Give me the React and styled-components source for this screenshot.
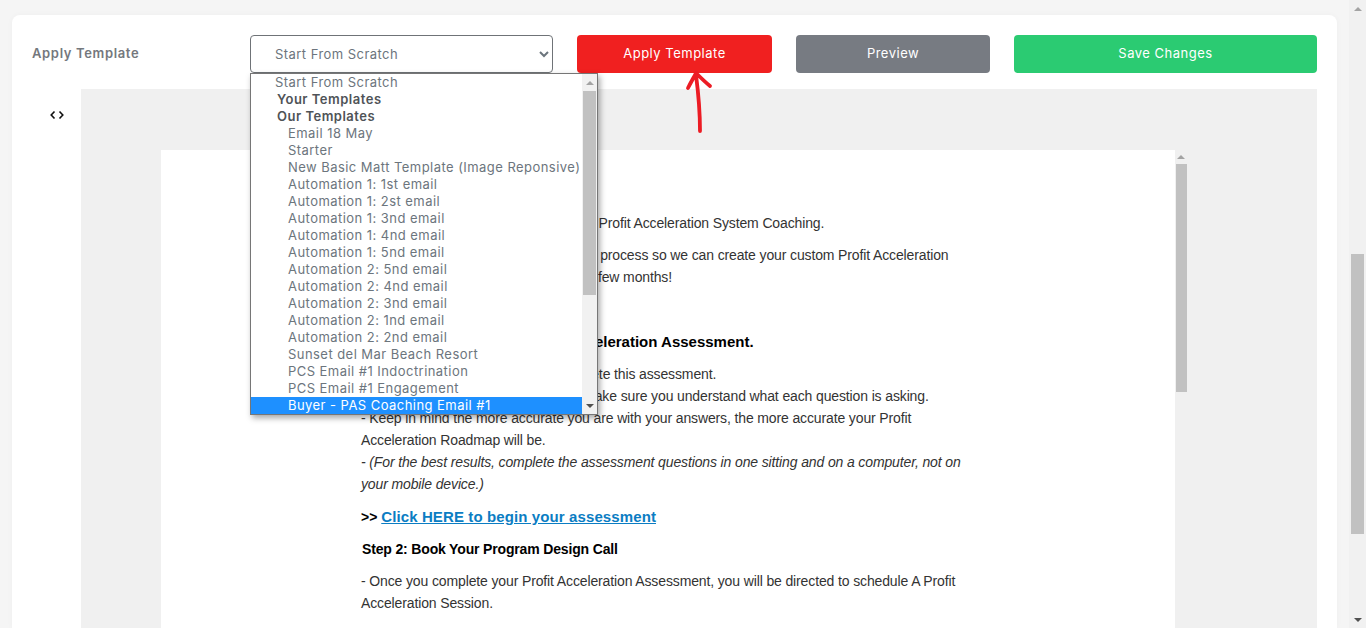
import React from "react";
import styled, { createGlobalStyle } from "styled-components";

const GlobalStyle = createGlobalStyle`
  html, body {
    margin: 0;
    height: 100%;
    overflow: hidden;
    background: #f5f5f5;
  }
`;

const uiFont = `"Inter", "Open Sans", sans-serif`;

const Page = styled.div`
  display: flex;
  height: 628px;
  overflow: hidden;
`;

const Main = styled.div`
  flex: 1;
  min-width: 0;
  padding: 15px 12px 0;
`;

const Card = styled.section`
  height: 613px;
  background: #fff;
  border-radius: 8px 8px 0 0;
  box-shadow: 0 0 6px rgba(0, 0, 0, 0.03);
  display: flex;
  flex-direction: column;
`;

const Toolbar = styled.div`
  display: flex;
  align-items: center;
  gap: 24px;
  padding: 20px 20px 16px;
  position: relative;
`;

const Label = styled.div`
  width: 194px;
  padding-bottom: 3px;
  font: 600 13px ${uiFont};
  letter-spacing: 0.65px;
  color: #74787d;
`;

const SelectWrap = styled.div`
  position: relative;
  width: 303px;
  height: 38px;
`;

const Select = styled.select`
  width: 100%;
  height: 100%;
  padding-left: 20px;
  border: 1px solid #6f7377;
  border-radius: 4px;
  background: #fff;
  font: 400 13px ${uiFont};
  letter-spacing: 0.45px;
  color: #6c757d;
`;

const Dropdown = styled.div`
  position: absolute;
  top: 38px;
  left: 0;
  z-index: 5;
  width: 348px;
  height: 342px;
  box-sizing: border-box;
  display: flex;
  border: 1px solid #767676;
  background: #fff;
  box-shadow: 2px 3px 6px rgba(0, 0, 0, 0.35);
`;

const OptionList = styled.div`
  flex: 1;
  min-width: 0;
  font: 400 13px/17px ${uiFont};
  color: #6c757d;
  white-space: nowrap;
`;

const Option = styled.div`
  height: 17px;
  padding-left: ${(p) => (p.$level === 2 ? 37 : p.$level === 1 ? 26 : 24)}px;
  font-weight: ${(p) => (p.$level === 1 ? 600 : 400)};
  letter-spacing: ${(p) => (p.$level === 1 ? "0.5px" : "0.45px")};
  color: ${(p) => (p.$selected ? "#fff" : p.$level === 1 ? "#4f5357" : "#6c757d")};
  background: ${(p) => (p.$selected ? "#1e90ff" : "transparent")};
`;

const ScrollTrack = styled.div`
  flex: none;
  width: ${(p) => p.$width}px;
  height: ${(p) => p.$height || "100%"};
  box-sizing: border-box;
  display: flex;
  flex-direction: column;
  align-items: center;
  background: ${(p) => p.$bg};
`;

const ArrowCap = styled.div`
  flex: none;
  align-self: stretch;
  height: ${(p) => p.$size}px;
  display: flex;
  align-items: center;
  justify-content: center;
  margin-top: ${(p) => (p.$end ? "auto" : 0)};
  &::before {
    content: "";
    border-left: 4px solid transparent;
    border-right: 4px solid transparent;
    ${(p) => (p.$end ? "border-top" : "border-bottom")}: 4px solid ${(p) => p.$color};
  }
`;

const Thumb = styled.div`
  flex: none;
  width: ${(p) => p.$width}px;
  height: ${(p) => p.$height}px;
  margin-top: ${(p) => p.$top || 0}px;
  margin-left: ${(p) => p.$left || 0}px;
  background: #c1c1c1;
`;

const ActionButton = styled.button`
  flex: none;
  width: ${(p) => p.$width}px;
  height: 38px;
  padding: 0 0 2px;
  border: 0;
  border-radius: 4px;
  background: ${(p) => p.$bg};
  color: #fff;
  font: 400 13px ${uiFont};
  letter-spacing: 0.5px;
`;

const ArrowMark = styled.svg`
  position: absolute;
  left: 665px;
  top: 55px;
  z-index: 6;
`;

const Body = styled.div`
  flex: 1;
  min-height: 0;
  display: flex;
  padding-right: 20px;
`;

const CodeGutter = styled.div`
  flex: none;
  width: 69px;
  padding: 17px 0 0 38px;
  box-sizing: border-box;
`;

const Canvas = styled.div`
  flex: 1;
  min-width: 0;
  background: #f0f0f0;
  padding: 61px 0 0 80px;
  display: flex;
  overflow: hidden;
`;

const Doc = styled.article`
  flex: none;
  width: 1014px;
  box-sizing: border-box;
  height: 600px;
  padding: 62px 0 0 200px;
  background: #fff;
  font: 400 14px/22px "Liberation Sans", Arial, sans-serif;
  letter-spacing: -0.13px;
  color: #333;
`;

const Text = styled.div`
  width: 615px;
  margin-bottom: 10px;
  min-height: 22px;
`;

const Heading = styled.div`
  padding-top: ${(p) => (p.$size === 15 ? 1 : 0)}px;
  margin-bottom: 10px;
  margin-left: ${(p) => p.$shift || 0}px;
  font-weight: 700;
  font-size: ${(p) => p.$size || 14}px;
  letter-spacing: ${(p) => p.$spacing || 0}px;
  color: #000;
`;

const Prompt = styled.span`
  font-size: 14px;
`;

const DocLink = styled.a`
  letter-spacing: 0.11px;
  color: #0b7dc3;
  text-decoration: underline;
`;

const optionData = [
  ["Start From Scratch", 0],
  ["Your Templates", 1],
  ["Our Templates", 1],
  ["Email 18 May", 2],
  ["Starter", 2],
  ["New Basic Matt Template (Image Reponsive)", 2],
  ["Automation 1: 1st email", 2],
  ["Automation 1: 2st email", 2],
  ["Automation 1: 3nd email", 2],
  ["Automation 1: 4nd email", 2],
  ["Automation 1: 5nd email", 2],
  ["Automation 2: 5nd email", 2],
  ["Automation 2: 4nd email", 2],
  ["Automation 2: 3nd email", 2],
  ["Automation 2: 1nd email", 2],
  ["Automation 2: 2nd email", 2],
  ["Sunset del Mar Beach Resort", 2],
  ["PCS Email #1 Indoctrination", 2],
  ["PCS Email #1 Engagement", 2],
  ["Buyer - PAS Coaching Email #1", 2],
];

export default function App() {
  return (
    <>
      <GlobalStyle />
      <Page>
        <Main>
          <Card>
            <Toolbar>
              <Label>Apply Template</Label>
              <SelectWrap>
                <Select defaultValue="scratch">
                  <option value="scratch">Start From Scratch</option>
                </Select>
                <Dropdown>
                  <OptionList>
                    {optionData.map(([name, level], i) => (
                      <Option key={name} $level={level} $selected={i === optionData.length - 1}>
                        {name}
                      </Option>
                    ))}
                  </OptionList>
                  <ScrollTrack $width={15} $bg="#f1f1f1">
                    <ArrowCap $size={17} $color="#a3a3a3" />
                    <Thumb $width={13} $height={204} />
                    <ArrowCap $size={17} $end $color="#505050" />
                  </ScrollTrack>
                </Dropdown>
              </SelectWrap>
              <ActionButton $width={195} $bg="#f02020">Apply Template</ActionButton>
              <ActionButton $width={194} $bg="#777b82">Preview</ActionButton>
              <ActionButton $width={303} $bg="#2bcb72">Save Changes</ActionButton>
              <ArrowMark width="50" height="65" viewBox="0 0 50 65" fill="none">
                <path
                  d="M23 61 C23 46 22 28 19 5 M11 18 C14 12 17 7 19 3 C23 7 28 12 33 16"
                  stroke="#ec1c24"
                  strokeWidth="3.8"
                  strokeLinecap="round"
                  strokeLinejoin="round"
                />
              </ArrowMark>
            </Toolbar>
            <Body>
              <CodeGutter>
                <svg width="14" height="10" viewBox="0 0 14 10" fill="none" stroke="#111" strokeWidth="1.6">
                  <polyline points="4.5,1.5 1.2,5 4.5,8.5" />
                  <polyline points="9.5,1.5 12.8,5 9.5,8.5" />
                </svg>
              </CodeGutter>
              <Canvas>
                <Doc>
                  <Text>Congratulations on registering with the Profit Acceleration System Coaching.</Text>
                  <Text>
                    Next we will run you through the intake process so we can create your custom Profit Acceleration
                    <br />
                    Roadmap that you will use for the next few months!
                  </Text>
                  <Text />
                  <Heading $size={15}>Step 1: Complete Your Profit Acceleration Assessment.</Heading>
                  <Text>
                    - Set aside about 30 minutes to complete this assessment.
                    <br />
                    - Read every question carefully, and make sure you understand what each question is asking.
                    <br />
                    - Keep in mind the more accurate you are with your answers, the more accurate your Profit Acceleration Roadmap will be.
                    <br />
                    <em>- (For the best results, complete the assessment questions in one sitting and on a computer, not on your mobile device.)</em>
                  </Text>
                  <Heading $size={15}>
                    <Prompt>&gt;&gt; </Prompt>
                    <DocLink href="#assessment">Click HERE to begin your assessment</DocLink>
                  </Heading>
                  <Heading $shift={1} $spacing={-0.16}>Step 2: Book Your Program Design Call</Heading>
                  <Text>- Once you complete your Profit Acceleration Assessment, you will be directed to schedule A Profit Acceleration Session.</Text>
                </Doc>
                <ScrollTrack $width={12} $height="600px" $bg="#f0f0f0">
                  <ArrowCap $size={14} $color="#a3a3a3" />
                  <Thumb $width={11} $height={228} $left={1} />
                </ScrollTrack>
              </Canvas>
            </Body>
          </Card>
        </Main>
        <ScrollTrack $width={17} $height="628px" $bg="#f1f1f1">
          <ArrowCap $size={17} $color="#a3a3a3" />
          <Thumb $width={13} $height={280} $top={237} />
          <ArrowCap $size={17} $end $color="#505050" />
        </ScrollTrack>
      </Page>
    </>
  );
}
